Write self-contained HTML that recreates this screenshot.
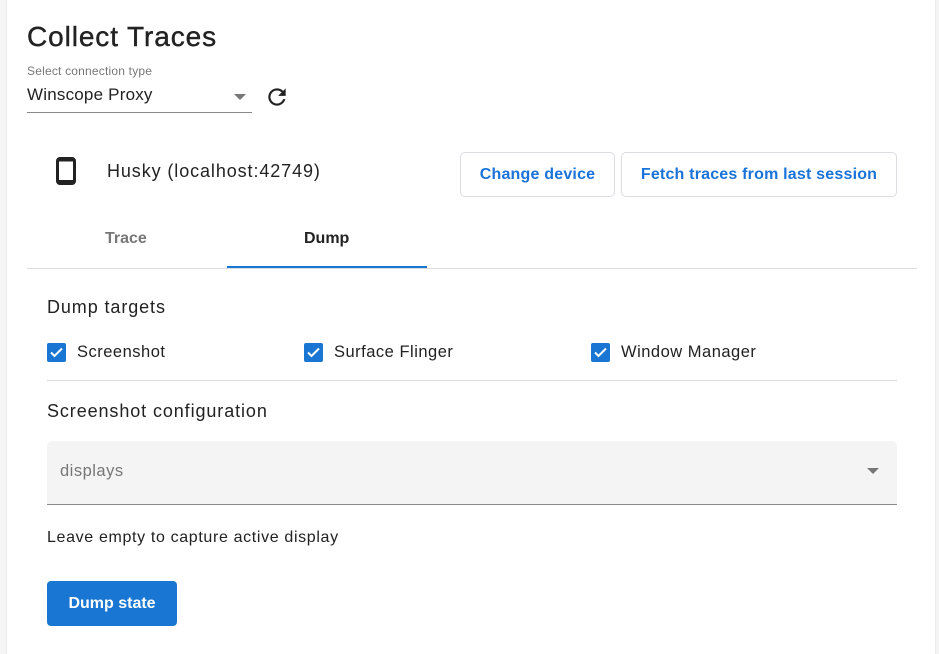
<!DOCTYPE html>
<html style="width:939px;height:654px;overflow:hidden"><head><style>
*{box-sizing:border-box;margin:0;padding:0}
body{width:939px;height:654px;background:#f5f5f5;font-family:"Liberation Sans",Arial,sans-serif;color:#202124;position:relative;overflow:hidden}
.card{position:absolute;left:7px;top:-8px;width:928px;height:680px;background:#fff;border-radius:8px;box-shadow:0 0 2px rgba(0,0,0,.12)}
.a{position:absolute;white-space:nowrap}
.btn{position:absolute;border:1px solid #dadce0;border-radius:5px;color:#1a73d8;font-size:16px;font-weight:bold;display:flex;align-items:center;justify-content:center;background:#fff;letter-spacing:0.2px}
.cb{position:absolute;width:19px;height:19px;background:#1976d2;border-radius:2px}
.cb svg{position:absolute;left:0;top:0}
.lbl{font-size:16.5px;color:#222;letter-spacing:0.5px}
</style></head><body>
<div class="card"></div>
<div class="a" style="left:27px;top:21px;font-size:28px;color:#222;letter-spacing:0.9px;-webkit-text-stroke:0.4px #222">Collect Traces</div>
<div class="a" style="left:27px;top:64px;font-size:12px;color:#777;letter-spacing:0.2px">Select connection type</div>
<div class="a" style="left:27px;top:85px;font-size:17px;color:#222;letter-spacing:0.2px">Winscope Proxy</div>
<div class="a" style="left:234px;top:94px;width:0;height:0;border-left:6px solid transparent;border-right:6px solid transparent;border-top:6px solid #777"></div>
<div class="a" style="left:27px;top:112px;width:225px;height:1px;background:#8a8a8a"></div>
<svg class="a" style="left:264px;top:84px" width="26" height="26" viewBox="0 0 24 24"><path fill="#222" d="M17.65 6.35A7.96 7.96 0 0 0 12 4a8 8 0 1 0 7.73 10h-2.08A6 6 0 1 1 12 6c1.66 0 3.14.69 4.22 1.78L13 11h7V4l-2.35 2.35z"/></svg>
<svg class="a" style="left:56px;top:157px" width="20" height="28" viewBox="0 0 20 28"><rect x="1.5" y="1.5" width="17" height="25" rx="2.5" fill="none" stroke="#222" stroke-width="3"/><rect x="1.5" y="1.5" width="17" height="3" fill="#222"/><rect x="1.5" y="23" width="17" height="3.5" fill="#222"/></svg>
<div class="a" style="left:107px;top:161px;font-size:18px;color:#222;letter-spacing:0.9px">Husky (localhost:42749)</div>
<div class="btn" style="left:460px;top:152px;width:155px;height:45px">Change device</div>
<div class="btn" style="left:621px;top:152px;width:276px;height:45px">Fetch traces from last session</div>
<div class="a" style="left:105px;top:230px;font-size:16px;font-weight:bold;color:#777">Trace</div>
<div class="a" style="left:304px;top:230px;font-size:16px;font-weight:bold;color:#222">Dump</div>
<div class="a" style="left:27px;top:268px;width:890px;height:1px;background:#ddd"></div>
<div class="a" style="left:227px;top:266px;width:200px;height:2px;background:#1976d2"></div>
<div class="a" style="left:47px;top:297px;font-size:18px;color:#222;letter-spacing:0.9px">Dump targets</div>
<div class="cb" style="left:47px;top:343px"><svg width="19" height="19" viewBox="0 0 19 19"><path d="M4 9.5l3.5 3.5 7.5-7.5" fill="none" stroke="#fff" stroke-width="2"/></svg></div>
<div class="a lbl" style="left:77px;top:343px">Screenshot</div>
<div class="cb" style="left:304px;top:343px"><svg width="19" height="19" viewBox="0 0 19 19"><path d="M4 9.5l3.5 3.5 7.5-7.5" fill="none" stroke="#fff" stroke-width="2"/></svg></div>
<div class="a lbl" style="left:334px;top:343px">Surface Flinger</div>
<div class="cb" style="left:591px;top:343px"><svg width="19" height="19" viewBox="0 0 19 19"><path d="M4 9.5l3.5 3.5 7.5-7.5" fill="none" stroke="#fff" stroke-width="2"/></svg></div>
<div class="a lbl" style="left:621px;top:343px">Window Manager</div>
<div class="a" style="left:47px;top:380px;width:850px;height:1px;background:#ddd"></div>
<div class="a" style="left:47px;top:401px;font-size:18px;color:#222;letter-spacing:0.9px">Screenshot configuration</div>
<div class="a" style="left:47px;top:441px;width:850px;height:64px;background:#f4f4f4;border-radius:5px 5px 0 0;border-bottom:1px solid #8a8a8a"></div>
<div class="a" style="left:60px;top:462px;font-size:16.5px;color:#777;letter-spacing:0.5px">displays</div>
<div class="a" style="left:867px;top:468px;width:0;height:0;border-left:6px solid transparent;border-right:6px solid transparent;border-top:6px solid #777"></div>
<div class="a" style="left:47px;top:529px;font-size:16px;color:#222;letter-spacing:0.65px">Leave empty to capture active display</div>
<div class="a" style="left:47px;top:581px;width:130px;height:45px;background:#1976d2;border-radius:4px;color:#fff;font-size:16px;font-weight:bold;display:flex;align-items:center;justify-content:center">Dump state</div>
</body></html>
